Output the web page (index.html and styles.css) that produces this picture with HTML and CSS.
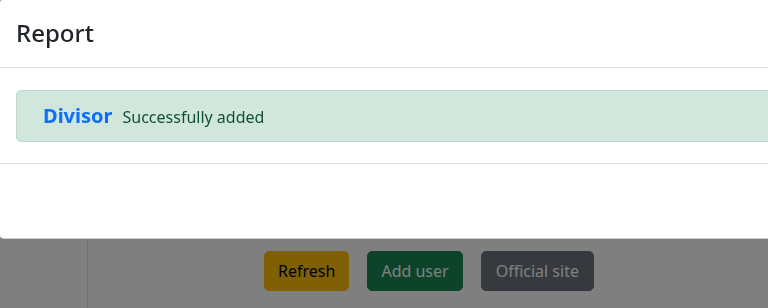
FILE: index.html
```html
<!DOCTYPE html>
<html lang="en">
<head>
  <meta charset="UTF-8">
  <meta name="viewport" content="width=device-width, initial-scale=1.0">
  <title>Users</title>
  <link rel="stylesheet" href="styles.css">
</head>
<body>
  <div class="layout">
    <aside class="sidebar"></aside>
    <main class="content">
      <div class="actions">
        <button class="btn btn-warning">Refresh</button>
        <button class="btn btn-success">Add user</button>
        <button class="btn btn-secondary">Official site</button>
      </div>
    </main>
  </div>

  <div class="backdrop"></div>

  <div class="modal">
    <div class="modal-header">
      <h5 class="modal-title">Report</h5>
    </div>
    <div class="modal-body">
      <div class="alert">
        <span class="alert-name">Divisor</span>
        <span class="alert-text">Successfully added</span>
      </div>
    </div>
    <div class="modal-footer"></div>
  </div>
</body>
</html>
```

FILE: styles.css
```css
* {
  box-sizing: border-box;
}

body {
  margin: 0;
  font-family: "Noto Sans", "Open Sans", sans-serif;
  font-size: 16px;
  color: #212529;
  background-color: #fff;
  overflow: hidden;
}

.layout {
  display: flex;
  height: 308px;
}

.sidebar {
  width: 88px;
  border-right: 1px solid #dee2e6;
}

.content {
  flex: 1;
  padding-top: 251px;
  padding-left: 2px;
}

.actions {
  display: flex;
  justify-content: center;
  gap: 18px;
}

.btn {
  font-family: inherit;
  font-size: 16px;
  line-height: 24px;
  padding: 7px 14px;
  border: 1px solid transparent;
  border-radius: 5px;
}

.btn-warning {
  background-color: #ffc107;
  border-color: #ffc107;
  color: #000;
  padding: 7px 13px;
}

.btn-success {
  background-color: #198754;
  border-color: #198754;
  color: #fff;
  padding: 7px 13px;
}

.btn-secondary {
  background-color: #6c757d;
  border-color: #6c757d;
  color: #fff;
}

/* modal over the page */
.backdrop {
  position: fixed;
  inset: 0;
  background-color: rgba(0, 0, 0, 0.5);
}

.modal {
  position: absolute;
  top: -1px;
  left: -1px;
  width: 800px;
  background-color: #fff;
  border: 1px solid rgba(0, 0, 0, 0.2);
  border-radius: 5px;
}

.modal-header {
  padding: 15px 16px 16px;
  border-bottom: 1px solid #dee2e6;
}

.modal-title {
  margin: 0;
  font-size: 24px;
  font-weight: 500;
  line-height: 36px;
}

.modal-body {
  padding: 22px 16px 21px;
}

.alert {
  display: flex;
  align-items: baseline;
  gap: 10px;
  padding: 13px 26px;
  background-color: #d1e7dd;
  border: 1px solid #badbcc;
  border-radius: 5px;
  color: #0f5132;
}

.alert-name {
  color: #0d6efd;
  font-size: 20px;
  font-weight: 700;
  line-height: 24px;
}

.alert-text {
  font-size: 16px;
}

.modal-footer {
  height: 75px;
  border-top: 1px solid #dee2e6;
}
```
